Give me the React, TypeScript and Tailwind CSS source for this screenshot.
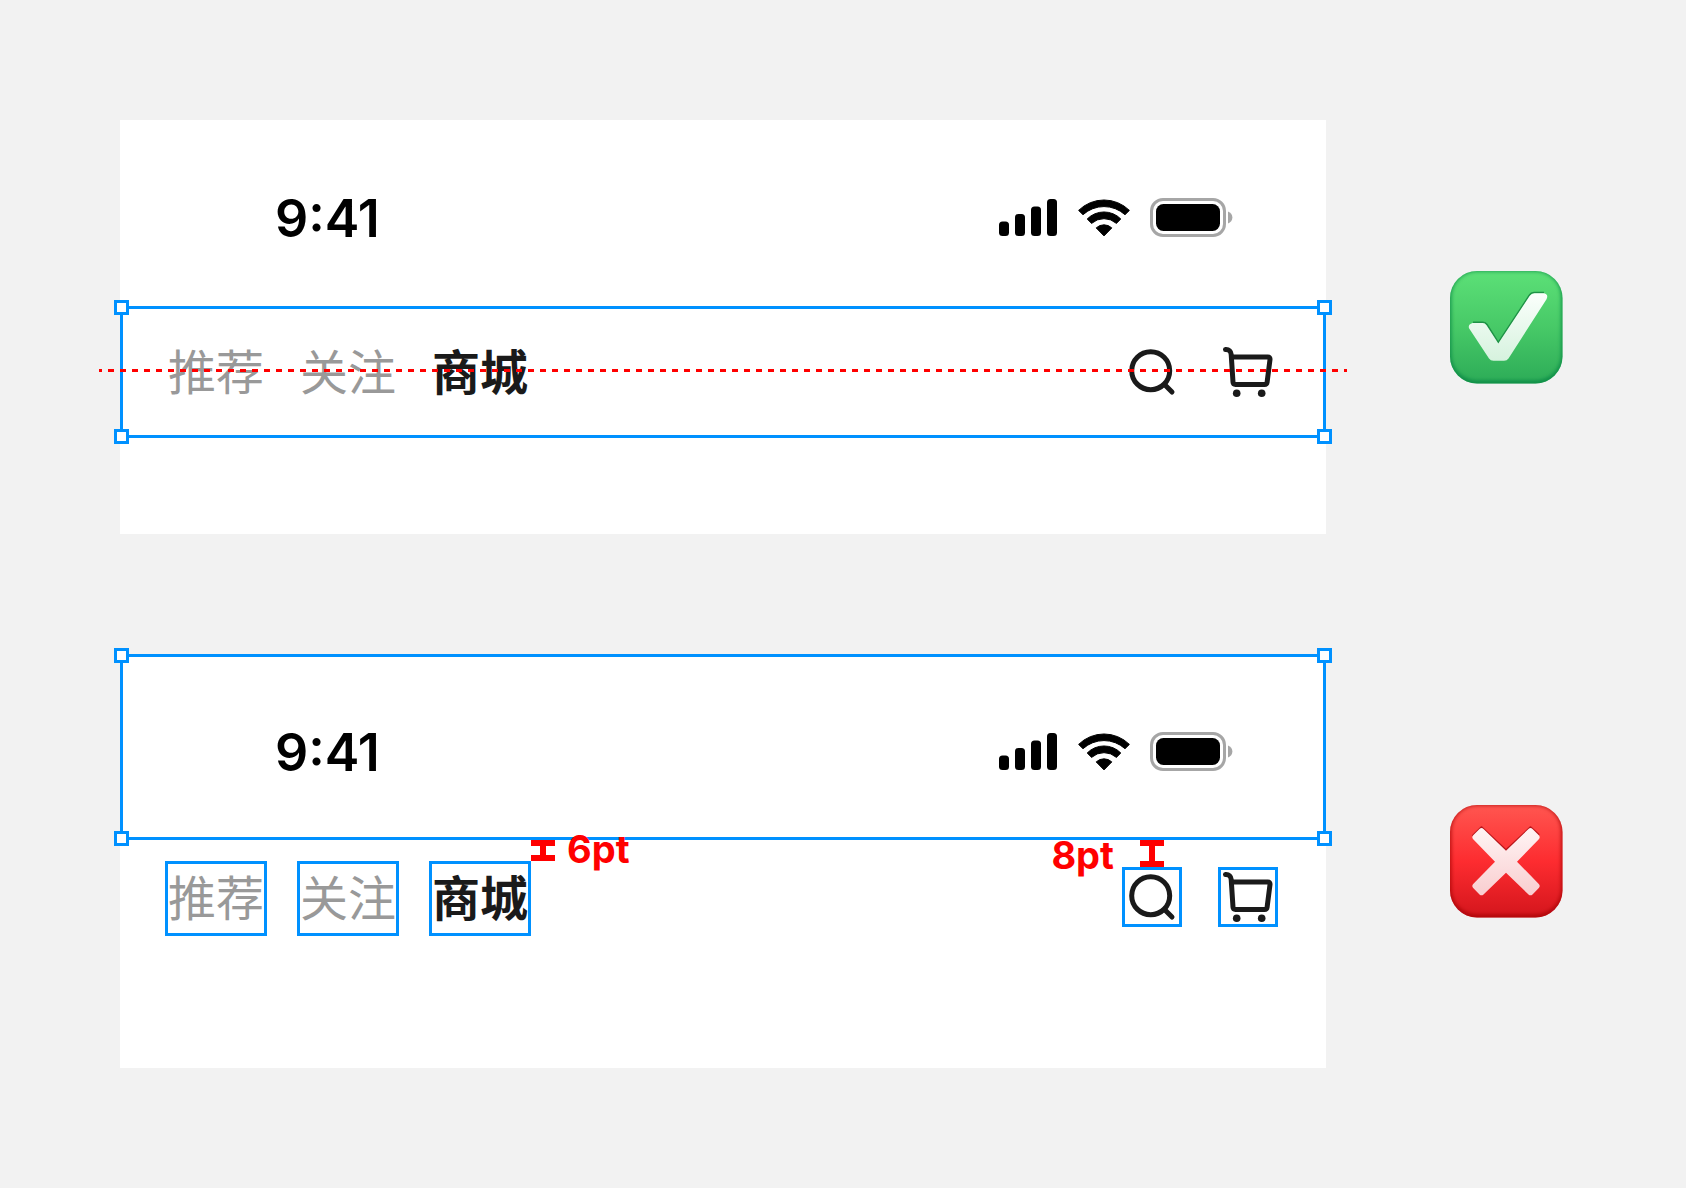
import clsx from "clsx";

const TABS = ["推荐", "关注", "商城"];
const ACTIVE_TAB = "商城";

function Selection() {
  const handle = "absolute h-[15px] w-[15px] border-3 border-[#0091ff] bg-white";
  return (
    <div className="pointer-events-none absolute inset-0 border-3 border-[#0091ff]">
      <span className={clsx(handle, "-top-[9px] -left-[9px]")} />
      <span className={clsx(handle, "-top-[9px] -right-[9px]")} />
      <span className={clsx(handle, "-bottom-[9px] -left-[9px]")} />
      <span className={clsx(handle, "-right-[9px] -bottom-[9px]")} />
    </div>
  );
}

function SignalIcon() {
  return (
    <svg width="59" height="38" viewBox="0 0 59 38">
      <rect x="0" y="22.500" width="10" height="14.500" rx="3.500" />
      <rect x="16" y="15" width="10" height="22" rx="3.500" />
      <rect x="32" y="7.500" width="10" height="29.500" rx="3.500" />
      <rect x="48" y="0" width="10" height="37" rx="3.500" />
    </svg>
  );
}

function WifiIcon() {
  return (
    <svg width="52" height="38" viewBox="0 0 52 38" stroke="black" strokeWidth="1" strokeLinejoin="round">
      <path d="M.6 11.4A36.2 36.2 0 0 1 51.4 11.4L47 15.7A31.2 31.2 0 0 0 5 15.7Z" />
      <path d="M9.2 20A23.6 23.6 0 0 1 42.8 20L38.4 24.4A18.6 18.6 0 0 0 13.6 24.4Z" />
      <path d="M18.2 28.9A11.4 11.4 0 0 1 33.8 28.9L26 36.9Z" />
    </svg>
  );
}

function BatteryIcon() {
  return (
    <svg width="83" height="41" viewBox="0 0 83 41">
      <rect x="1.5" y="1.5" width="73" height="36" rx="11.5" fill="none" stroke="#a6a6a6" strokeWidth="3" />
      <rect x="6" y="6" width="64" height="27" rx="7.5" />
      <path d="M78 13.5v12c2.6-1 4.4-3.3 4.4-6s-1.8-5-4.4-6Z" fill="#a6a6a6" />
    </svg>
  );
}

function SearchIcon() {
  return (
    <svg width="54" height="54" viewBox="3 3 54 54" fill="none" stroke="#1a1a1a" strokeWidth="5" strokeLinecap="round">
      <circle cx="28.7" cy="28.7" r="19" />
      <path d="M42.5 42.5 50 50" />
    </svg>
  );
}

function CartIcon() {
  return (
    <svg width="54" height="54" viewBox="3 3 54 54" fill="none" stroke="#1a1a1a" strokeWidth="5" strokeLinecap="round" strokeLinejoin="round">
      <path d="M7.5 7.5C11 7.2 13 9.5 13.2 12.5L15 40.2Q15.2 42.5 17.5 42.5H46.5Q48.8 42.5 49.1 40.2L52 17.5Q52.2 15 49.8 15H13.5" />
      <circle cx="18.7" cy="51.3" r="3.8" fill="#1a1a1a" stroke="none" />
      <circle cx="43.7" cy="51.3" r="3.8" fill="#1a1a1a" stroke="none" />
    </svg>
  );
}

function CheckBadge() {
  return (
    <svg width="113" height="113" viewBox="0 0 113 113" role="img" aria-label="正确">
      <defs>
        <linearGradient id="green" x1="0" y1="0" x2="0" y2="1">
          <stop offset="0" stopColor="#5ce077" />
          <stop offset="0.5" stopColor="#47c967" />
          <stop offset="1" stopColor="#2cab57" />
        </linearGradient>
        <linearGradient id="greenMark" x1="0" y1="0" x2="0" y2="1">
          <stop offset="0" stopColor="#fbfffc" />
          <stop offset="1" stopColor="#d6f2de" />
        </linearGradient>
        <clipPath id="greenClip">
          <rect width="112.5" height="112.5" rx="27" />
        </clipPath>
        <filter id="greenSoft" x="-10%" y="-10%" width="120%" height="120%">
          <feGaussianBlur stdDeviation="2" />
        </filter>
      </defs>
      <g clipPath="url(#greenClip)">
        <rect width="113" height="113" fill="url(#green)" />
        <rect x="-1" y="-2" width="114.5" height="114" rx="28" fill="none" stroke="#078040" strokeWidth="3.5" filter="url(#greenSoft)" />
      </g>
      {/* dark lip above the mark */}
      <path d="M23 51.3H33Q35.5 51.3 37 53.5L48.3 71.3 79.5 24Q81 21.6 84 21.6H94" fill="none" stroke="#1f9147" strokeWidth="1.5" />
      <path d="M22.5 52H32.5Q35 52 36.5 54.2L48.3 72.5 79.8 24.8Q81.5 22.3 84.5 22.3H94Q98.8 23.3 96.5 28.3L58.5 87.5Q57 89.7 54 89.7H43.5Q40.5 89.7 39 87.5L19.2 57.5Q17.5 53.5 22.5 52Z" fill="url(#greenMark)" />
    </svg>
  );
}

function CrossBadge() {
  return (
    <svg width="113" height="113" viewBox="0 0 113 113" role="img" aria-label="错误">
      <defs>
        <linearGradient id="red" x1="0" y1="0" x2="0" y2="1">
          <stop offset="0" stopColor="#ff5650" />
          <stop offset="0.5" stopColor="#fd2c30" />
          <stop offset="1" stopColor="#d3151c" />
        </linearGradient>
        <linearGradient id="redMark" gradientUnits="userSpaceOnUse" x1="0" y1="22" x2="0" y2="91">
          <stop offset="0" stopColor="#fff5f5" />
          <stop offset="1" stopColor="#f9cdcf" />
        </linearGradient>
        <clipPath id="redClip">
          <rect width="112.5" height="112.5" rx="27" />
        </clipPath>
        <filter id="redSoft" x="-10%" y="-10%" width="120%" height="120%">
          <feGaussianBlur stdDeviation="2" />
        </filter>
      </defs>
      <g clipPath="url(#redClip)">
        <rect width="113" height="113" fill="url(#red)" />
        <rect x="-1" y="-2" width="114.5" height="114" rx="28" fill="none" stroke="#a00008" strokeWidth="3.5" filter="url(#redSoft)" />
      </g>
      {/* dark lip above the mark */}
      <path d="M22.5 31 31.5 22.3 56 45.2 80.5 22.3 89 30" fill="none" stroke="#b8161b" strokeWidth="2" strokeLinejoin="round" />
      <path d="M33.5 24 56 45.7 78.5 24Q80.5 22.2 82.5 24L88.8 30.3Q90.6 32.3 88.8 34.3L67 56.7 88.8 79Q90.6 81 88.8 83L82.5 89.5Q80.5 91.2 78.5 89.5L56 67.7 33.5 89.5Q31.5 91.2 29.5 89.5L23.2 83Q21.4 81 23.2 79L45 56.7 23.2 34.3Q21.4 32.3 23.2 30.3L29.5 24Q31.5 22.2 33.5 24Z" fill="url(#redMark)" />
    </svg>
  );
}

function StatusBar({ selected = false }: { selected?: boolean }) {
  return (
    <div className="relative flex items-center justify-between pt-[65px] pr-[93px] pb-[55px] pl-[155px]">
      <span className="pt-[2px] font-[Inter,sans-serif] text-[52px] leading-[64px] font-semibold text-black">9:41</span>
      <div className="flex items-center gap-5">
        <SignalIcon />
        <WifiIcon />
        <BatteryIcon />
      </div>
      {selected && <Selection />}
    </div>
  );
}

function Beam({ tall = false }: { tall?: boolean }) {
  return (
    <span className={clsx("flex w-6 flex-col items-center border-y-6 border-[#ff0000]", tall ? "h-[27px]" : "h-[21px]")}>
      <span className="w-[6px] grow bg-[#ff0000]" />
    </span>
  );
}

function NavBar({ outlined = false }: { outlined?: boolean }) {
  const box = outlined && "outline-3 outline-[#0091ff]";
  const measure = "font-[Inter,sans-serif] text-[38px] leading-6 font-bold text-[#ff0000]";
  return (
    <div className={clsx("relative flex justify-between pr-[51px] pl-12", outlined ? "items-start pt-6" : "h-[132px] items-center")}>
      <nav className="flex gap-9">
        {TABS.map((tab) => (
          <div key={tab} className="relative">
            <button
              type="button"
              className={clsx(
                "block pb-[6px] font-['Noto_Sans_CJK_SC',sans-serif] text-[48px] leading-[63px] whitespace-nowrap",
                tab === ACTIVE_TAB ? "font-bold text-[#1a1a1a]" : "font-normal text-[#999999]",
                box
              )}
            >
              {tab}
            </button>
            {outlined && tab === ACTIVE_TAB && (
              <div className="absolute bottom-full left-full mb-[3px] ml-[3px] flex h-[21px] items-end gap-3">
                <Beam />
                <span className={measure}>6pt</span>
              </div>
            )}
          </div>
        ))}
      </nav>
      <div className={clsx("flex gap-[42px]", outlined && "pt-[6px]")}>
        <div className="relative">
          <button type="button" aria-label="搜索" className={clsx("block", box)}>
            <SearchIcon />
          </button>
          {outlined && (
            <div className="absolute right-[15px] bottom-full mb-[3px] flex h-[27px] items-end gap-[26px]">
              <span className={measure}>8pt</span>
              <Beam tall />
            </div>
          )}
        </div>
        <button type="button" aria-label="购物车" className={clsx("block", box)}>
          <CartIcon />
        </button>
      </div>
      {!outlined && (
        <>
          <Selection />
          {/* center guide */}
          <div className="pointer-events-none absolute -inset-x-[21px] top-[63px] h-[3px] bg-[repeating-linear-gradient(to_right,#ff0000_0_3px,transparent_3px_9px,#ff0000_9px_12px)]" />
        </>
      )}
    </div>
  );
}

export default function App() {
  return (
    <main className="flex min-h-screen flex-col gap-[120px] bg-[#f2f2f2] py-[120px] pl-[120px]">
      <section className="flex">
        <div className="grow bg-white pb-24">
          <StatusBar />
          <NavBar />
        </div>
        <div className="flex w-[360px] shrink-0 items-center justify-center">
          <CheckBadge />
        </div>
      </section>

      <section className="flex">
        <div className="grow bg-white pb-[135px]">
          <StatusBar selected />
          <NavBar outlined />
        </div>
        <div className="flex w-[360px] shrink-0 items-center justify-center">
          <CrossBadge />
        </div>
      </section>
    </main>
  );
}
